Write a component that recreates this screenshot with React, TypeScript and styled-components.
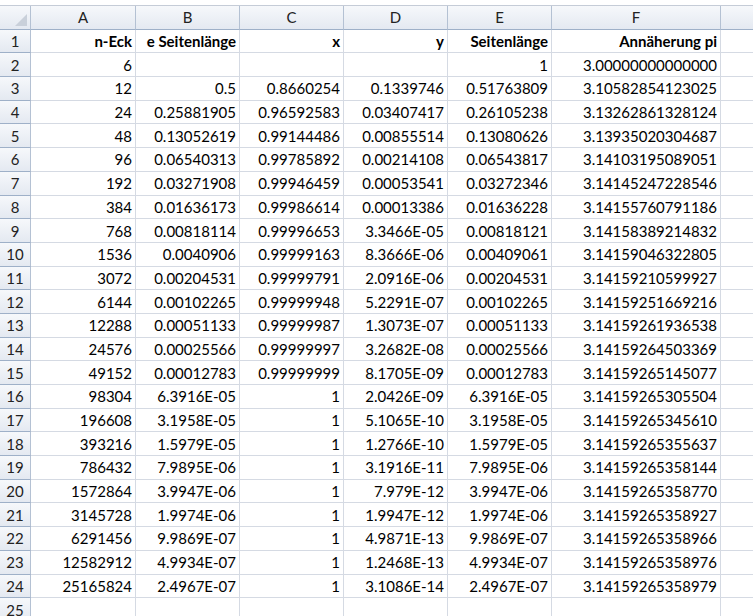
import React from "react";
import styled, { createGlobalStyle } from "styled-components";

const G = createGlobalStyle`
  body { margin: 0; background: #fff; font-family: "Lato", "Liberation Sans", sans-serif; overflow: hidden; }
`;

const cols = [31, 105, 104, 104, 104, 104, 169, 60];
const tpl = cols.map((c) => c + "px").join(" ");

const Top = styled.div`height: 5px; background: #fff; border-bottom: 1px solid #c5ccd7;`;
const Grid = styled.div`display: grid; grid-template-columns: ${tpl}; grid-auto-rows: 23.7px;`;
const Head = styled.div<{ $corner?: boolean }>`
  background: linear-gradient(#f6f8fb, #e4e9f1);
  border-right: 1px solid #b4c1d3; border-bottom: 1px solid #9eb0c8;
  display: flex; align-items: center; justify-content: center;
  font-size: 15px; color: #222; box-sizing: border-box; position: relative;
`;
const RowHead = styled(Head)`justify-content: center;`;
const Cell = styled.div<{ $bold?: boolean }>`
  border-right: 1px solid #d5dae3; border-bottom: 1px solid #d5dae3;
  box-sizing: border-box; display: flex; align-items: center; justify-content: flex-end;
  padding-right: 3px; font-size: 15px; color: #000; white-space: nowrap; overflow: visible;
  font-weight: ${(p) => (p.$bold ? 700 : 400)};
`;
const Tri = styled.div`position: absolute; right: 3px; bottom: 3px; width: 0; height: 0;
  border-left: 12px solid transparent; border-bottom: 12px solid #c9d0da;`;

const data: string[][] = [
  ["n-Eck", "e Seitenlänge", "x", "y", "Seitenlänge", "Annäherung pi"],
  ["6", "", "", "", "1", "3.00000000000000"],
  ["12", "0.5", "0.8660254", "0.1339746", "0.51763809", "3.10582854123025"],
  ["24", "0.25881905", "0.96592583", "0.03407417", "0.26105238", "3.13262861328124"],
  ["48", "0.13052619", "0.99144486", "0.00855514", "0.13080626", "3.13935020304687"],
  ["96", "0.06540313", "0.99785892", "0.00214108", "0.06543817", "3.14103195089051"],
  ["192", "0.03271908", "0.99946459", "0.00053541", "0.03272346", "3.14145247228546"],
  ["384", "0.01636173", "0.99986614", "0.00013386", "0.01636228", "3.14155760791186"],
  ["768", "0.00818114", "0.99996653", "3.3466E-05", "0.00818121", "3.14158389214832"],
  ["1536", "0.0040906", "0.99999163", "8.3666E-06", "0.00409061", "3.14159046322805"],
  ["3072", "0.00204531", "0.99999791", "2.0916E-06", "0.00204531", "3.14159210599927"],
  ["6144", "0.00102265", "0.99999948", "5.2291E-07", "0.00102265", "3.14159251669216"],
  ["12288", "0.00051133", "0.99999987", "1.3073E-07", "0.00051133", "3.14159261936538"],
  ["24576", "0.00025566", "0.99999997", "3.2682E-08", "0.00025566", "3.14159264503369"],
  ["49152", "0.00012783", "0.99999999", "8.1705E-09", "0.00012783", "3.14159265145077"],
  ["98304", "6.3916E-05", "1", "2.0426E-09", "6.3916E-05", "3.14159265305504"],
  ["196608", "3.1958E-05", "1", "5.1065E-10", "3.1958E-05", "3.14159265345610"],
  ["393216", "1.5979E-05", "1", "1.2766E-10", "1.5979E-05", "3.14159265355637"],
  ["786432", "7.9895E-06", "1", "3.1916E-11", "7.9895E-06", "3.14159265358144"],
  ["1572864", "3.9947E-06", "1", "7.979E-12", "3.9947E-06", "3.14159265358770"],
  ["3145728", "1.9974E-06", "1", "1.9947E-12", "1.9974E-06", "3.14159265358927"],
  ["6291456", "9.9869E-07", "1", "4.9871E-13", "9.9869E-07", "3.14159265358966"],
  ["12582912", "4.9934E-07", "1", "1.2468E-13", "4.9934E-07", "3.14159265358976"],
  ["25165824", "2.4967E-07", "1", "3.1086E-14", "2.4967E-07", "3.14159265358979"],
  ["", "", "", "", "", ""],
];

export default function App() {
  return (
    <>
      <G />
      <Top />
      <Grid>
        <Head $corner><Tri /></Head>
        {["A", "B", "C", "D", "E", "F", ""].map((h, i) => (
          <Head key={i}>{h}</Head>
        ))}
        {data.map((row, r) => (
          <React.Fragment key={r}>
            <RowHead>{r + 1}</RowHead>
            {row.map((v, c) => (
              <Cell key={c} $bold={r === 0}>{v}</Cell>
            ))}
            <Cell />
          </React.Fragment>
        ))}
      </Grid>
    </>
  );
}
